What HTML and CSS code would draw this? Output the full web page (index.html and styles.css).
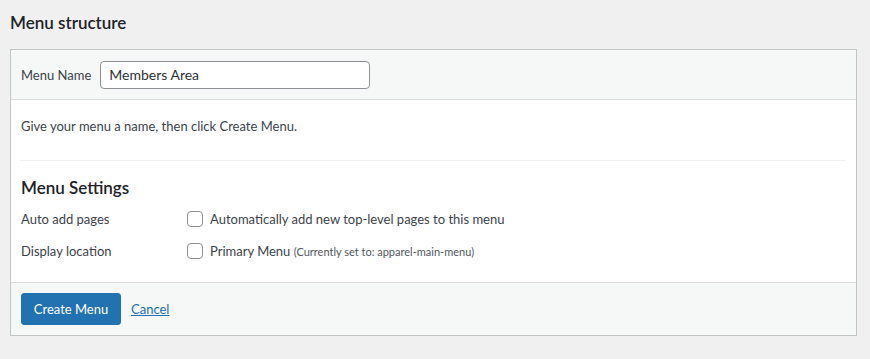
FILE: index.html
```html
<!DOCTYPE html>
<html>
<head>
<meta charset="utf-8">
<link rel="stylesheet" href="styles.css">
</head>
<body>
<div class="wrap">
  <h2 class="title">Menu structure</h2>
  <div class="box">
    <div class="box-head">
      <label class="name-label" for="mn">Menu Name</label>
      <input id="mn" class="name-input" type="text" value="Members Area">
    </div>
    <div class="box-body">
      <p class="hint">Give your menu a name, then click Create Menu.</p>
      <div class="sep"></div>
      <h3 class="settings-title">Menu Settings</h3>
      <div class="row">
        <div class="row-label">Auto add pages</div>
        <label class="row-field"><span class="cb"></span><span>Automatically add new top-level pages to this menu</span></label>
      </div>
      <div class="row">
        <div class="row-label">Display location</div>
        <label class="row-field"><span class="cb"></span><span>Primary Menu <span class="small">(Currently set to: apparel-main-menu)</span></span></label>
      </div>
    </div>
    <div class="box-foot">
      <button class="btn">Create Menu</button>
      <a class="cancel" href="#">Cancel</a>
    </div>
  </div>
</div>
</body>
</html>
```
FILE: styles.css
```css
html, body {
  margin: 0;
  padding: 0;
  background: #f0f0f1;
  font-family: "Lato", "Noto Sans", sans-serif;
  font-size: 13px;
  color: #3c434a;
}
.wrap {
  padding: 12px 13px 0 10px;
}
.title {
  margin: 0 0 15px 0;
  font-size: 17px;
  font-weight: 600;
  line-height: 22px;
  color: #1d2327;
}
.box {
  border: 1px solid #c3c4c7;
  background: #fff;
}
.box-head {
  height: 50px;
  box-sizing: border-box;
  background: #f6f7f7;
  border-bottom: 1px solid #dcdcde;
  display: flex;
  align-items: center;
  padding: 0 10px;
  gap: 9px;
}
.name-label {
  font-size: 13px;
  color: #3c434a;
}
.name-input {
  width: 270px;
  height: 28px;
  box-sizing: border-box;
  border: 1px solid #8c8f94;
  border-radius: 4px;
  padding: 0 8px;
  font-family: inherit;
  font-size: 14px;
  color: #2c3338;
  background: #fff;
  outline: none;
}
.box-body {
  padding: 16px 10px 15px 10px;
}
.hint {
  margin: 0;
  line-height: 20px;
}
.sep {
  height: 1px;
  background: #f0f0f1;
  margin: 24px 0 0 -1px;
}
.settings-title {
  margin: 16px 0 4px 0;
  font-size: 17px;
  font-weight: 600;
  line-height: 22px;
  color: #1d2327;
}
.row {
  display: flex;
  align-items: center;
  height: 32px;
}
.row-label {
  width: 166px;
  flex: none;
}
.row-field {
  display: flex;
  align-items: center;
  gap: 7px;
  font-size: 13px;
  color: #3c434a;
}
.cb {
  width: 16px;
  height: 16px;
  box-sizing: border-box;
  border: 1px solid #8c8f94;
  border-radius: 4px;
  background: #fff;
  flex: none;
}
.small {
  font-size: 11px;
  color: #50575e;
}
.box-foot {
  height: 53px;
  box-sizing: border-box;
  background: #f6f7f7;
  border-top: 1px solid #dcdcde;
  display: flex;
  align-items: center;
  padding: 0 10px;
  gap: 10px;
}
.btn {
  height: 32px;
  width: 100px;
  border: 1px solid #2271b1;
  border-radius: 3px;
  background: #2271b1;
  color: #fff;
  font-family: inherit;
  font-size: 13px;
  padding: 0;
}
.cancel {
  color: #2271b1;
  text-decoration: underline;
  font-size: 13px;
}
```
